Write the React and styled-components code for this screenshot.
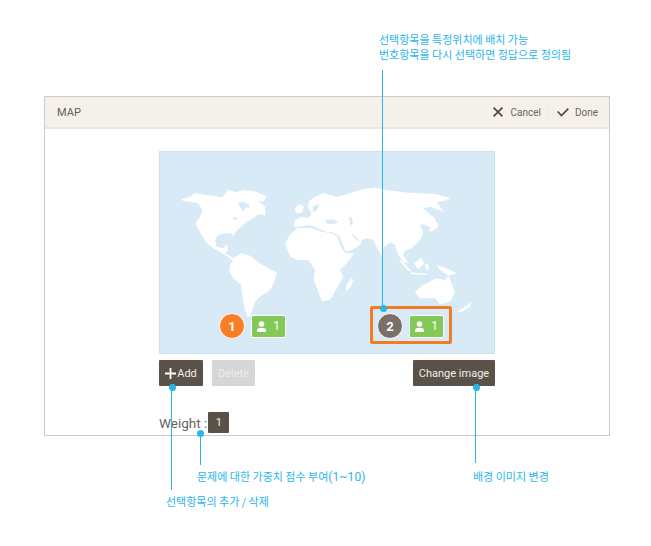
import React from 'react';
import styled, { createGlobalStyle } from 'styled-components';

const ACCENT = '#29b6ea';
const SEA = '#d8eaf6';

const GlobalStyle = createGlobalStyle`
  html, body {
    margin: 0;
    padding: 0;
    background: #fff;
    font-family: Roboto, "Noto Sans CJK KR", sans-serif;
  }
`;

const Stage = styled.div`
  position: relative;
  width: 651px;
  height: 546px;
  padding: 96px 41px 0 44px;
  box-sizing: border-box;
  overflow: hidden;
`;

const Panel = styled.section`
  width: 566px;
  height: 340px;
  box-sizing: border-box;
  border: 1px solid #cbcbcb;
`;

const Header = styled.header`
  height: 32px;
  box-sizing: border-box;
  display: flex;
  align-items: center;
  justify-content: space-between;
  padding: 0 11px 0 12px;
  background: #f5f1ea;
  border-bottom: 2px solid #e9e6df;
`;

const Title = styled.h1`
  margin: 0;
  font-size: 11px;
  font-weight: 400;
  color: #665f58;
`;

const Actions = styled.div`
  display: flex;
  align-items: center;
`;

const Action = styled.button`
  display: flex;
  align-items: center;
  gap: ${(p) => p.$gap}px;
  height: 14px;
  padding: 0;
  border: 0;
  background: none;
  font: 400 10px Roboto, sans-serif;
  color: #6c655e;
`;

const ActionDivider = styled.span`
  width: 1px;
  height: 14px;
  margin: 0 8px 0 7px;
  background: #ebe7df;
`;

const Body = styled.div`
  display: flex;
  flex-direction: column;
  padding: 22px 114px 0;
`;

const MapFrame = styled.div`
  position: relative;
  width: 336px;
  height: 203px;
  box-sizing: border-box;
  background: ${SEA};
  border: 1px solid #cfe1ee;
`;

const MapSvg = styled.svg`
  display: block;
  width: 100%;
  height: 100%;
`;

const Pin = styled.div`
  position: absolute;
  left: ${(p) => p.$left}px;
  top: 161px;
  display: flex;
  align-items: center;
  gap: 6px;
`;

const PinNumber = styled.span`
  width: 26px;
  height: 26px;
  box-sizing: border-box;
  display: flex;
  align-items: center;
  justify-content: center;
  border: 1.5px solid #fff;
  border-radius: 50%;
  background: ${(p) => p.$color};
  color: #fff;
  font-size: 13px;
  font-weight: 700;
`;

const PinCount = styled.span`
  width: 35px;
  height: 23px;
  box-sizing: border-box;
  display: flex;
  align-items: center;
  justify-content: space-between;
  padding: 0 5px 0 4px;
  border: 1.5px solid #fff;
  border-radius: 2px;
  background: #84c857;
  color: #fff;
  font-size: 12px;
`;

const Highlight = styled.div`
  position: absolute;
  left: 210px;
  top: 154px;
  width: 82px;
  height: 38px;
  box-sizing: border-box;
  border: 3px solid #f37b21;
  border-radius: 2px;
`;

const ButtonRow = styled.div`
  display: flex;
  gap: 9px;
  margin-top: 6px;
`;

const Button = styled.button`
  height: 26px;
  width: ${(p) => p.$width}px;
  padding: 0;
  display: flex;
  align-items: center;
  justify-content: center;
  gap: 1px;
  border: 0;
  border-radius: 1px;
  background: ${(p) => (p.disabled ? '#d6d6d6' : '#5a5148')};
  color: ${(p) => (p.disabled ? '#ececec' : '#f1efec')};
  font: 400 11px Roboto, sans-serif;
  ${(p) => p.$push && 'margin-left: auto;'}
`;

const WeightRow = styled.div`
  display: flex;
  align-items: center;
  gap: 1px;
  margin-top: 26px;
  font-size: 13.5px;
  color: #68625c;
`;

const WeightValue = styled.span`
  width: 21px;
  height: 21px;
  display: flex;
  align-items: center;
  justify-content: center;
  border-radius: 1px;
  background: #5a5148;
  color: #f1efec;
  font-size: 11px;
`;

/* annotation layer, sits on top of the mockup */
const Note = styled.div`
  position: absolute;
  left: ${(p) => p.$x}px;
  top: ${(p) => p.$y}px;
  color: ${ACCENT};
  font: 400 11px/15px "Noto Sans CJK KR", sans-serif;
  white-space: nowrap;
`;

const NoteLatin = styled.span`
  font: 400 12px/15px Roboto, sans-serif;
  letter-spacing: 0.1px;
`;

const Leader = styled.div`
  position: absolute;
  left: ${(p) => p.$x}px;
  top: ${(p) => p.$y}px;
  width: 1px;
  height: ${(p) => p.$h}px;
  background: ${ACCENT};
`;

const Dot = styled.div`
  position: absolute;
  left: ${(p) => p.$x - 3.5}px;
  top: ${(p) => p.$y - 3.5}px;
  width: 7px;
  height: 7px;
  border-radius: 50%;
  background: ${ACCENT};
`;

const UserIcon = () => (
  <svg width="11" height="11" viewBox="0 0 11 11" fill="#fff">
    <circle cx="5.5" cy="3" r="2.8" />
    <path d="M1 11V8.8C1 7.5 3 6.8 5.5 6.8S10 7.5 10 8.8V11Z" />
  </svg>
);

// land traced at 3x from the page, hence the two scaled groups
const WorldMap = () => (
  <MapSvg viewBox="160 152 334 201" preserveAspectRatio="none">
    <g transform="translate(175 185) scale(0.3333)">
      <g fill="#fff">
        <path d="M20 42 L45 35 L60 25 L90 30 L115 32 L140 38 L160 15 L185 22 L205 15 L235 18 L255 25 L275 35 L265 50 L245 47 L258 55 L270 65 L272 90 L250 88 L235 100 L215 110 L200 125 L185 135 L175 155 L170 145 L150 145 L130 150 L120 165 L125 185 L145 190 L155 178 L160 195 L150 205 L165 212 L178 222 L172 226 L155 212 L135 200 L115 190 L95 175 L80 150 L68 130 L62 115 L75 95 L82 75 L70 55 L45 50 L25 48 Z" />
        <path d="M165 240 L180 215 L200 205 L225 212 L250 232 L280 250 L305 262 L298 290 L285 315 L255 335 L240 350 L232 375 L225 395 L218 395 L208 370 L202 330 L198 300 L175 280 L163 260 Z" />
      </g>
      <g fill={SEA}>
        <path d="M188 54 L205 50 L224 60 L221 70 L212 66 L205 80 L196 68 Z" />
        <path d="M176 97 L188 99 L184 105 L174 102 Z" />
      </g>
    </g>
    <g transform="translate(280 185) scale(0.3333)">
      <g fill="#fff">
        <path d="M42 125 L45 105 L65 95 L85 100 L95 85 L85 70 L85 50 L105 35 L130 25 L150 30 L170 35 L210 25 L250 12 L285 8 L320 15 L370 22 L420 25 L470 28 L512 40 L490 48 L470 50 L480 65 L490 80 L470 72 L450 65 L430 70 L445 85 L465 100 L470 115 L455 130 L430 118 L420 120 L430 145 L420 165 L395 190 L378 195 L368 210 L385 235 L372 232 L355 210 L345 180 L330 172 L310 190 L305 213 L295 195 L280 165 L262 160 L245 165 L240 180 L215 195 L195 200 L185 180 L170 150 L155 140 L140 142 L125 135 L105 125 L85 120 L60 125 Z" />
        <path d="M15 175 L30 150 L50 130 L90 128 L125 140 L155 145 L170 155 L185 190 L198 205 L222 205 L200 235 L180 255 L190 275 L165 320 L150 345 L125 348 L115 320 L102 285 L105 255 L85 225 L55 225 L30 215 Z" />
        <path d="M215 280 L220 285 L210 310 L198 318 L198 300 Z" />
        <path d="M45 70 L58 58 L72 64 L66 84 L48 84 Z" />
        <path d="M360 222 L395 258 L385 258 L362 232 Z" />
        <path d="M390 262 L440 266 L440 270 L395 268 Z" />
        <path d="M402 235 L425 218 L432 236 L415 252 Z" />
        <path d="M435 235 L445 238 L447 258 L437 252 Z" />
        <path d="M470 240 L500 250 L530 265 L505 272 L480 255 Z" />
        <path d="M405 320 L430 300 L470 280 L495 285 L505 272 L525 320 L510 350 L480 358 L465 340 L420 340 Z" />
        <path d="M530 380 L555 365 L575 350 L570 365 L545 380 Z" />
        <path d="M445 135 L465 120 L472 112 L474 125 L455 140 Z" />
      </g>
      <g fill={SEA}>
        <path d="M135 106 L160 103 L175 112 L160 117 L142 116 Z" />
        <path d="M207 97 L216 98 L219 120 L211 119 Z" />
        <path d="M98 66 L114 56 L117 62 L106 82 L99 82 Z" />
        <path d="M173 150 L177 150 L197 200 L193 202 Z" />
        <path d="M215 150 L221 150 L238 166 L233 168 Z" />
      </g>
    </g>
  </MapSvg>
);

const App = () => (
  <Stage>
    <GlobalStyle />
    <Panel>
      <Header>
        <Title>MAP</Title>
        <Actions>
          <Action $gap={7}>
            <svg width="10" height="10" viewBox="0 0 10 10" stroke="#4e4842" strokeWidth="1.7" fill="none">
              <path d="M0.6 0.6L9.4 9.4M9.4 0.6L0.6 9.4" />
            </svg>
            Cancel
          </Action>
          <ActionDivider />
          <Action $gap={6}>
            <svg width="12" height="9" viewBox="0 0 12 9" stroke="#4e4842" strokeWidth="1.7" fill="none">
              <path d="M0.7 3.5L4.5 7.5L11.3 0.7" />
            </svg>
            Done
          </Action>
        </Actions>
      </Header>
      <Body>
        <MapFrame>
          <WorldMap />
          <Pin $left={59}>
            <PinNumber $color="#f97d22">1</PinNumber>
            <PinCount><UserIcon />1</PinCount>
          </Pin>
          <Pin $left={217}>
            <PinNumber $color="#7a7069">2</PinNumber>
            <PinCount><UserIcon />1</PinCount>
          </Pin>
          <Highlight />
        </MapFrame>
        <ButtonRow>
          <Button $width={44}>
            <svg width="11" height="11" viewBox="0 0 11 11" stroke="#fff" strokeWidth="1.8">
              <path d="M5.5 0V11M0 5.5H11" />
            </svg>
            Add
          </Button>
          <Button $width={43} disabled>Delete</Button>
          <Button $width={82} $push>Change image</Button>
        </ButtonRow>
        <WeightRow>
          Weight :<WeightValue>1</WeightValue>
        </WeightRow>
      </Body>
    </Panel>

    <Note $x={379} $y={32}>
      선택항목을 특정위치에 배치 가능<br />
      번호항목을 다시 선택하면 정답으로 정의됨
    </Note>
    <Leader $x={382} $y={70} $h={238} />
    <Dot $x={383} $y={308} />

    <Dot $x={172} $y={387} />
    <Leader $x={171} $y={387} $h={103} />
    <Note $x={166} $y={494}>선택항목의 추가 / 삭제</Note>

    <Dot $x={200} $y={433} />
    <Leader $x={200} $y={433} $h={32} />
    <Note $x={197} $y={469}>문제에 대한 가중치 점수 부여<NoteLatin>(1~10)</NoteLatin></Note>

    <Dot $x={476} $y={387} />
    <Leader $x={475} $y={387} $h={76} />
    <Note $x={473} $y={469}>배경 이미지 변경</Note>
  </Stage>
);

export default App;
